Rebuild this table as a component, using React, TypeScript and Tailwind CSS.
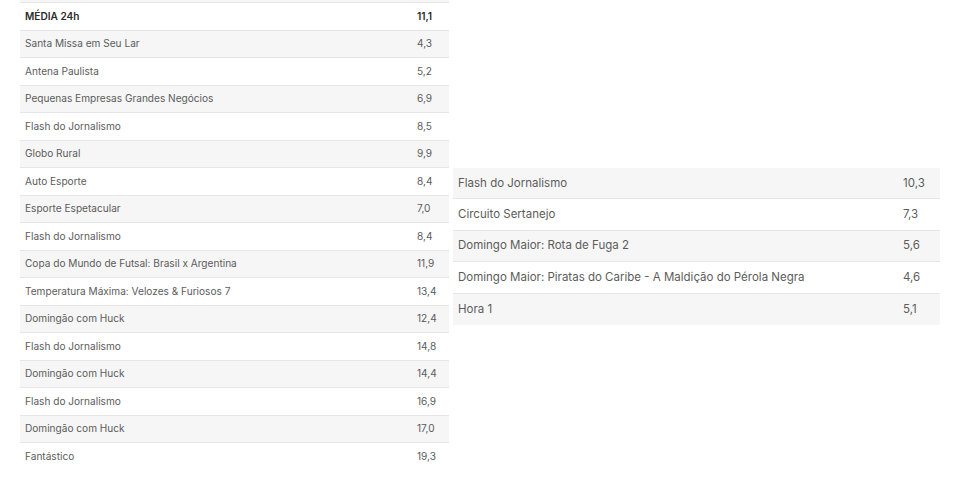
const left: [string, string][] = [
  ["Santa Missa em Seu Lar", "4,3"],
  ["Antena Paulista", "5,2"],
  ["Pequenas Empresas Grandes Negócios", "6,9"],
  ["Flash do Jornalismo", "8,5"],
  ["Globo Rural", "9,9"],
  ["Auto Esporte", "8,4"],
  ["Esporte Espetacular", "7,0"],
  ["Flash do Jornalismo", "8,4"],
  ["Copa do Mundo de Futsal: Brasil x Argentina", "11,9"],
  ["Temperatura Máxima: Velozes & Furiosos 7", "13,4"],
  ["Domingão com Huck", "12,4"],
  ["Flash do Jornalismo", "14,8"],
  ["Domingão com Huck", "14,4"],
  ["Flash do Jornalismo", "16,9"],
  ["Domingão com Huck", "17,0"],
  ["Fantástico", "19,3"],
];

const right: [string, string][] = [
  ["Flash do Jornalismo", "10,3"],
  ["Circuito Sertanejo", "7,3"],
  ["Domingo Maior: Rota de Fuga 2", "5,6"],
  ["Domingo Maior: Piratas do Caribe - A Maldição do Pérola Negra", "4,6"],
  ["Hora 1", "5,1"],
];

export default function App() {
  return (
    <div className="w-[966px] h-[483px] bg-white overflow-hidden flex font-['Inter',sans-serif] text-[#5c5c5c]">
      {/* left table */}
      <div className="w-[429px] ml-[20px] flex flex-col text-[10.1px]">
        <div className="h-[3px] bg-[#f6f6f6] border-b border-[#e6e6e6]" />
        <div className="h-[27.5px] flex items-center justify-between px-[5px] border-b border-[#e6e6e6] font-semibold text-[#2a2a2a]">
          <span>MÉDIA 24h</span>
          <span className="w-[27px]">11,1</span>
        </div>
        {left.map(([name, v], i) => (
          <div
            key={i}
            className={`h-[27.5px] flex items-center justify-between px-[5px] ${i % 2 === 0 ? "bg-[#f6f6f6]" : "bg-white"} ${i < left.length - 1 ? "border-b border-[#e6e6e6]" : ""}`}
          >
            <span>{name}</span>
            <span className="w-[27px]">{v}</span>
          </div>
        ))}
      </div>

      {/* right table */}
      <div className="w-[487px] ml-[4px] mt-[168px] self-start flex flex-col text-[11.5px]">
        {right.map(([name, v], i) => (
          <div
            key={i}
            className={`h-[31.4px] flex items-center justify-between pl-[5px] pr-[5px] ${i % 2 === 0 ? "bg-[#f6f6f6]" : "bg-white"} ${i < right.length - 1 ? "border-b border-[#e6e6e6]" : ""}`}
          >
            <span>{name}</span>
            <span className="w-[32px]">{v}</span>
          </div>
        ))}
      </div>
    </div>
  );
}
